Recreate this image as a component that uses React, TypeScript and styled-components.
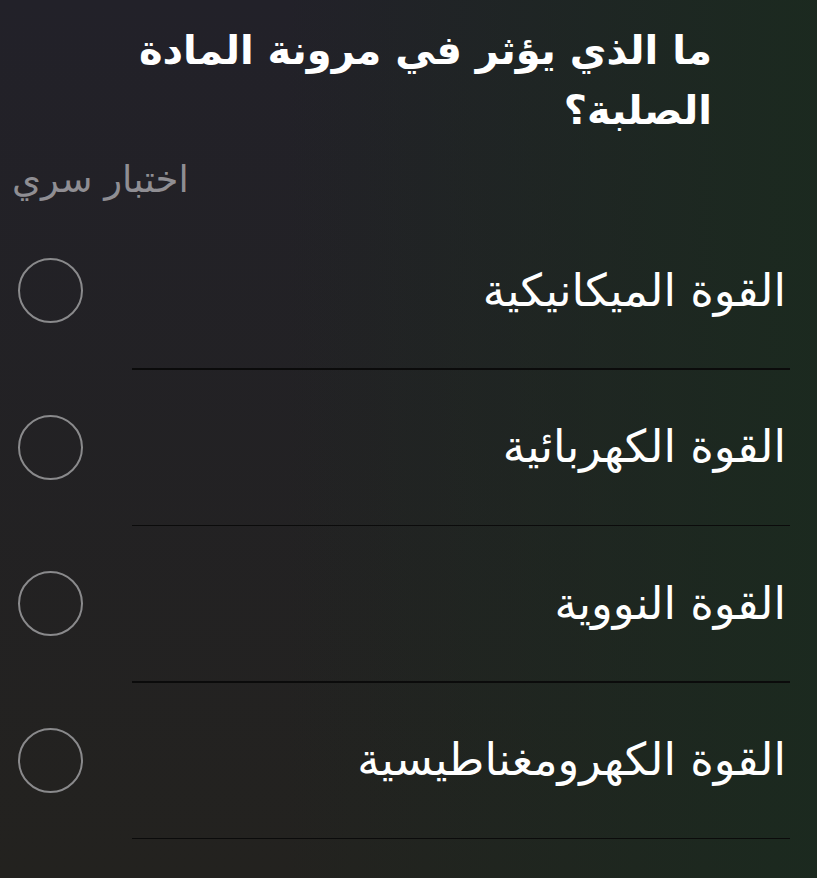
import styled, { createGlobalStyle } from "styled-components";

const GlobalStyle = createGlobalStyle`
  html, body {
    margin: 0;
    padding: 0;
  }
  body {
    min-height: 878px;
    background-color: #222222;
    background-image:
      linear-gradient(90deg, rgba(35, 33, 41, 0) 35%, rgba(27, 42, 31, 0.95) 100%),
      linear-gradient(180deg, #222129 0%, #23221f 100%);
    font-family: "DejaVu Sans", "Noto Sans", sans-serif;
  }
`;

const Page = styled.main`
  min-height: 878px;
  padding-top: 20px;
  box-sizing: border-box;
`;

const Question = styled.h1`
  margin: 0;
  padding: 0 105px 0 110px;
  direction: rtl;
  text-align: right;
  color: #ffffff;
  font-size: 40px;
  font-weight: 700;
  line-height: 60px;
`;

const Hint = styled.div`
  margin-top: 18px;
  padding-left: 12px;
  direction: rtl;
  text-align: left;
  color: #8f8e93;
  font-size: 37px;
  line-height: 44px;
  & > span {
    display: inline-block;
  }
`;

const OptionList = styled.ul`
  list-style: none;
  margin: 11px 0 0;
  padding: 0;
`;

const Option = styled.li`
  display: flex;
  flex-direction: column;
`;

const OptionBody = styled.label`
  height: 155px;
  display: flex;
  align-items: center;
  justify-content: space-between;
  padding: 0 31px 0 18px;
  cursor: pointer;
`;

const Radio = styled.span<{ $checked?: boolean }>`
  width: 65px;
  height: 65px;
  box-sizing: border-box;
  border-radius: 50%;
  border: 2.5px solid #8a8a8c;
  background: ${(p) => (p.$checked ? "#8a8a8c" : "transparent")};
  flex-shrink: 0;
`;

const OptionText = styled.span`
  direction: rtl;
  color: #ffffff;
  font-size: 45px;
  line-height: 56px;
`;

const Divider = styled.div`
  height: 1.5px;
  margin: 0 27px 0 132px;
  background: #0b0b0b;
`;

const options = [
  "القوة الميكانيكية",
  "القوة الكهربائية",
  "القوة النووية",
  "القوة الكهرومغناطيسية",
];

export default function App() {
  return (
    <>
      <GlobalStyle />
      <Page>
        <Question>ما الذي يؤثر في مرونة المادة الصلبة؟</Question>
        <Hint>
          <span>اختبار سري</span>
        </Hint>
        <OptionList>
          {options.map((text) => (
            <Option key={text}>
              <OptionBody>
                <Radio />
                <OptionText>{text}</OptionText>
              </OptionBody>
              <Divider />
            </Option>
          ))}
        </OptionList>
      </Page>
    </>
  );
}
